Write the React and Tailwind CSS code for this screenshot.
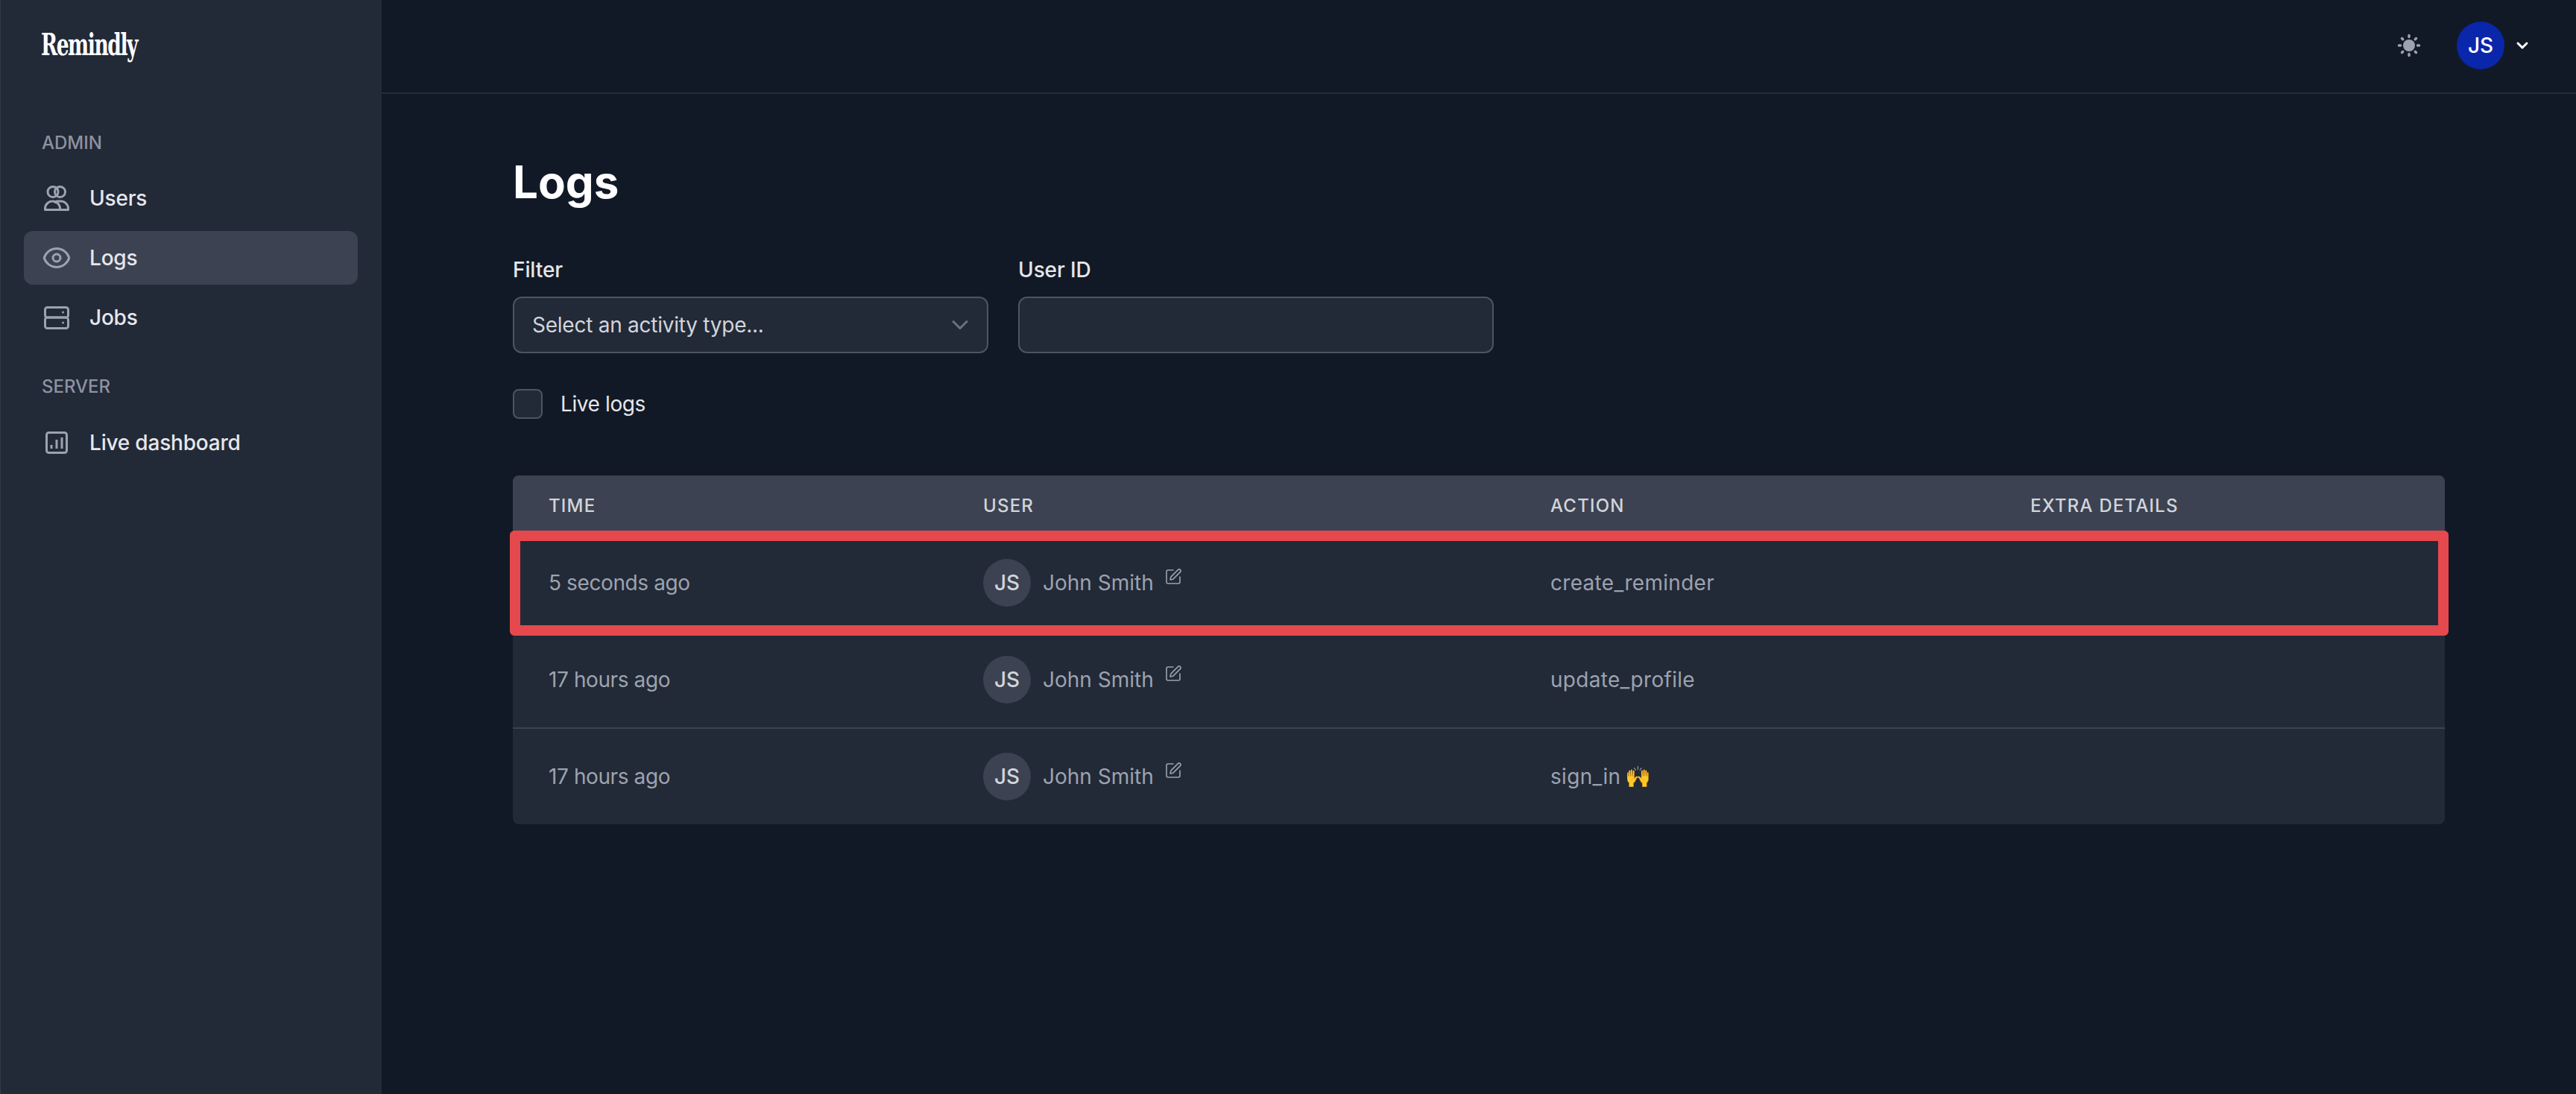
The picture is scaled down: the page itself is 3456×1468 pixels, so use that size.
import { ChevronDown, SquarePen } from "lucide-react";

const LOG_ROWS = [
  { time: "5 seconds ago", action: "create_reminder" },
  { time: "17 hours ago", action: "update_profile" },
  { time: "17 hours ago", action: "sign_in 🙌" },
];

const COLUMNS = "grid grid-cols-[583px_761px_644px_604px] items-center";

function UsersIcon() {
  return (
    <svg width="40" height="40" viewBox="0 0 40 40" fill="none" stroke="currentColor" strokeWidth="3" strokeLinejoin="round">
      <circle cx="15" cy="11.5" r="7" />
      <circle cx="24.5" cy="11.5" r="7" />
      <path d="M4.5 35.5v-1.5a10 10 0 0 1 20 0v1.5z" />
      <path d="M17 26.5a8 8 0 0 1 3-2.5h5a10 10 0 0 1 10.5 10v1.5H24.5" />
    </svg>
  );
}

function EyeIcon() {
  return (
    <svg width="40" height="40" viewBox="0 0 24 24" fill="none" stroke="currentColor" strokeWidth="1.8" strokeLinejoin="round">
      <path d="M2.036 12.322a1.012 1.012 0 0 1 0-.639C3.423 7.51 7.36 4.5 12 4.5c4.638 0 8.573 3.007 9.963 7.178.07.207.07.431 0 .639C20.577 16.49 16.64 19.5 12 19.5c-4.638 0-8.573-3.007-9.963-7.178Z" />
      <path d="M15 12a3 3 0 1 1-6 0 3 3 0 0 1 6 0Z" />
    </svg>
  );
}

function ServerIcon() {
  return (
    <svg width="40" height="40" viewBox="0 0 40 40" fill="none" stroke="currentColor" strokeWidth="3">
      <rect x="4.5" y="6.5" width="31" height="13.5" rx="3" />
      <rect x="4.5" y="20" width="31" height="14.5" rx="3" />
      <circle cx="28.5" cy="13" r="1.5" fill="currentColor" stroke="none" />
      <circle cx="28.5" cy="27" r="1.5" fill="currentColor" stroke="none" />
    </svg>
  );
}

function ChartIcon() {
  return (
    <svg width="40" height="40" viewBox="0 0 40 40" fill="none" stroke="currentColor" strokeWidth="3">
      <rect x="6.5" y="6.5" width="27" height="27" rx="3" />
      <path d="M13 23v5M20 16v12M27 13v15" />
    </svg>
  );
}

function SunIcon() {
  return (
    <svg width="32" height="32" viewBox="0 0 32 32" fill="#9ca3af" stroke="#9ca3af" strokeWidth="3.5" strokeLinecap="round">
      <circle cx="16" cy="16" r="8" stroke="none" />
      <path d="M16 2.5v2M16 27.5v2M2.5 16h2M27.5 16h2M6.5 6.5l1.2 1.2M24.3 24.3l1.2 1.2M6.5 25.5l1.2-1.2M24.3 7.7l1.2-1.2" />
    </svg>
  );
}

function NavItem({ icon: Icon, label, active }) {
  return (
    <a className={`flex h-[72px] items-center gap-6 rounded-xl pl-6 text-[28px] font-medium tracking-[-0.2px] text-[#e5e7eb] ${active ? "bg-[#3c4251]" : ""}`}>
      <span className="text-[#9ca3af]">
        <Icon />
      </span>
      {label}
    </a>
  );
}

function Field({ label, children }) {
  return (
    <div className="w-[638px]">
      <label className="block text-[28px] leading-10 font-medium tracking-[-0.1px] text-[#e5e7eb]">{label}</label>
      <div className="mt-4 flex h-[76px] items-center justify-between rounded-xl border-2 border-[#4b5563] bg-[#222937] pr-[18px] pl-6 text-[28px] text-[#d1d5db]">
        {children}
      </div>
    </div>
  );
}

export default function App() {
  return (
    <div className="flex h-[1468px] bg-[#121926] font-['Inter',sans-serif]">
      {/* Sidebar */}
      <aside className="w-[512px] shrink-0 border-l border-[#343b49] bg-[#222937]">
        <div className="h-[124px] pt-[35px] pl-[54px]">
          <span className="inline-block origin-left scale-x-[0.72] font-['DejaVu_Serif_Condensed',serif] text-[41px] leading-[50px] font-bold tracking-[-2px] text-white">
            Remindly
          </span>
        </div>
        <nav className="pr-8 pl-[31px]">
          <h4 className="mt-[50px] pl-6 text-[24px] leading-9 font-medium text-[#8d92a0] uppercase">Admin</h4>
          <div className="mt-[20px] space-y-2">
            <NavItem icon={UsersIcon} label="Users" />
            <NavItem icon={EyeIcon} label="Logs" active />
            <NavItem icon={ServerIcon} label="Jobs" />
          </div>
          <h4 className="mt-[39px] pl-6 text-[24px] leading-9 font-medium text-[#8d92a0] uppercase">Server</h4>
          <div className="mt-[21px]">
            <NavItem icon={ChartIcon} label="Live dashboard" />
          </div>
        </nav>
      </aside>

      <div className="min-w-0 flex-1">
        {/* Top bar */}
        <header className="flex h-[126px] items-center justify-end border-b-2 border-[#262d3a] pr-[60px] pb-[2px]">
          <SunIcon />
          <span className="ml-[48px] flex h-16 w-16 items-center justify-center rounded-full bg-[#0a26ab] text-[28px] font-medium text-white">
            JS
          </span>
          <ChevronDown size={24} strokeWidth={3} className="ml-3 text-white" />
        </header>

        <main className="px-[176px]">
          <h1 className="mt-[82px] text-[60px] leading-[72px] font-bold text-white">Logs</h1>

          <div className="mt-[62px] flex gap-10">
            <Field label="Filter">
              <span className="tracking-[-0.25px]">Select an activity type...</span>
              <ChevronDown size={36} strokeWidth={2} className="text-[#6b7280]" />
            </Field>
            <Field label="User ID" />
          </div>

          <label className="mt-[48px] flex items-center gap-6">
            <span className="h-10 w-10 rounded-lg border-2 border-[#4b5563] bg-[#222937]" />
            <span className="text-[28px] leading-10 tracking-[-0.4px] text-[#e5e7eb]">Live logs</span>
          </label>

          {/* Log table */}
          <div className="relative mt-[76px] rounded-lg bg-[#222937]">
            <div className={`${COLUMNS} h-[80px] rounded-t-lg bg-[#3c4251] pt-[2px] text-[24px] font-medium tracking-[1.2px] text-[#d1d5db] uppercase`}>
              <span className="pl-12">Time</span>
              <span className="pl-12">User</span>
              <span className="pl-12">Action</span>
              <span className="pl-12">Extra details</span>
            </div>
            {LOG_ROWS.map((row, i) => (
              <div
                key={i}
                className={`${COLUMNS} text-[28px] text-[#9ca3af] ${i === 2 ? "h-[128px]" : "h-[130px] border-b-2 border-[#3c4251]"}`}
              >
                <span className="pl-12 tracking-[-0.4px]">{row.time}</span>
                <div className="flex items-center pl-12">
                  <span className="flex h-16 w-16 items-center justify-center rounded-full bg-[#3c4251] text-[28px] font-medium text-[#d1d5db]">
                    JS
                  </span>
                  <span className="ml-4">John Smith</span>
                  <SquarePen size={24} strokeWidth={1.6} className="mb-[16px] ml-[14px]" />
                </div>
                <span className="pl-12 tracking-[0.3px] [word-spacing:-3px]">{row.action}</span>
                <span />
              </div>
            ))}

            {/* Highlight annotation */}
            <div className="absolute top-[74px] -right-[5px] -left-[4px] h-[141px] rounded-md border-[14px] border-[#e5494d]" />
          </div>
        </main>
      </div>
    </div>
  );
}
